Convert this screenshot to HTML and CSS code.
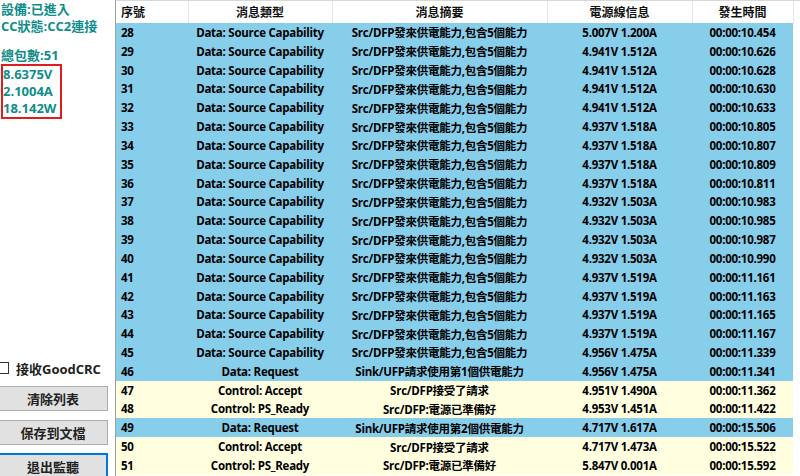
FILE: index.html
```html
<!DOCTYPE html>
<html lang="zh-TW">
<head>
  <meta charset="UTF-8" />
  <title>PD監聽</title>
  <link rel="stylesheet" href="styles.css">
</head>
<body>
  <div class="app">
    <!-- 左側狀態欄 -->
    <div class="side">
      <div class="status">
        <div>設備:已進入</div>
        <div>CC狀態:CC2連接</div>
      </div>
      <div class="count">總包數:51</div>
      <div class="meter">
        <div>8.6375V</div>
        <div>2.1004A</div>
        <div>18.142W</div>
      </div>
      <div class="spacer"></div>
      <label class="check"><span class="box"></span>接收GoodCRC</label>
      <button class="btn">清除列表</button>
      <button class="btn">保存到文檔</button>
      <button class="btn focus">退出監聽</button>
    </div>

    <!-- 消息列表 -->
    <div class="list">
      <table class="grid">
        <colgroup>
          <col style="width:72px">
          <col style="width:144px">
          <col style="width:215px">
          <col style="width:145px">
          <col style="width:101px">
        </colgroup>
        <thead>
          <tr>
            <th class="first">序號</th>
            <th>消息類型</th>
            <th>消息摘要</th>
            <th>電源線信息</th>
            <th>發生時間</th>
          </tr>
        </thead>
        <tbody id="rows"></tbody>
      </table>
    </div>
  </div>

  <script>
    // 消息數據
    var cap = ["Data: Source Capability", "Src/DFP發來供電能力,包含5個能力"];
    var data = [
      [28, cap, "5.007V 1.200A", "00:00:10.454"],
      [29, cap, "4.941V 1.512A", "00:00:10.626"],
      [30, cap, "4.941V 1.512A", "00:00:10.628"],
      [31, cap, "4.941V 1.512A", "00:00:10.630"],
      [32, cap, "4.941V 1.512A", "00:00:10.633"],
      [33, cap, "4.937V 1.518A", "00:00:10.805"],
      [34, cap, "4.937V 1.518A", "00:00:10.807"],
      [35, cap, "4.937V 1.518A", "00:00:10.809"],
      [36, cap, "4.937V 1.518A", "00:00:10.811"],
      [37, cap, "4.932V 1.503A", "00:00:10.983"],
      [38, cap, "4.932V 1.503A", "00:00:10.985"],
      [39, cap, "4.932V 1.503A", "00:00:10.987"],
      [40, cap, "4.932V 1.503A", "00:00:10.990"],
      [41, cap, "4.937V 1.519A", "00:00:11.161"],
      [42, cap, "4.937V 1.519A", "00:00:11.163"],
      [43, cap, "4.937V 1.519A", "00:00:11.165"],
      [44, cap, "4.937V 1.519A", "00:00:11.167"],
      [45, cap, "4.956V 1.475A", "00:00:11.339"],
      [46, ["Data: Request", "Sink/UFP請求使用第1個供電能力"], "4.956V 1.475A", "00:00:11.341"],
      [47, ["Control: Accept", "Src/DFP接受了請求"], "4.951V 1.490A", "00:00:11.362", "ctl"],
      [48, ["Control: PS_Ready", "Src/DFP:電源已準備好"], "4.953V 1.451A", "00:00:11.422", "ctl"],
      [49, ["Data: Request", "Sink/UFP請求使用第2個供電能力"], "4.717V 1.617A", "00:00:15.506"],
      [50, ["Control: Accept", "Src/DFP接受了請求"], "4.717V 1.473A", "00:00:15.522", "ctl"],
      [51, ["Control: PS_Ready", "Src/DFP:電源已準備好"], "5.847V 0.001A", "00:00:15.592", "ctl"]
    ];

    var html = "";
    data.forEach(function (r) {
      html += '<tr class="' + (r[4] || "dat") + '">' +
        '<td class="first">' + r[0] + '</td>' +
        '<td>' + r[1][0] + '</td>' +
        '<td>' + r[1][1] + '</td>' +
        '<td>' + r[2] + '</td>' +
        '<td>' + r[3] + '</td></tr>';
    });
    document.getElementById("rows").innerHTML = html;
  </script>
</body>
</html>
```

FILE: styles.css
```css
/* 基本 */
html, body {
  margin: 0;
  padding: 0;
  background: #fff;
  overflow: hidden;
}
body {
  font-family: "Open Sans", "Noto Sans CJK TC", sans-serif;
  width: 800px;
  height: 476px;
}
.app {
  display: flex;
  height: 476px;
}

/* 左側 */
.side {
  width: 115px;
  flex: none;
  display: flex;
  flex-direction: column;
  font-weight: bold;
}
.status, .count, .meter {
  color: #0f8d8b;
  font-size: 13px;
  line-height: 17px;
  padding-left: 1px;
}
.status {
  padding-top: 1px;
}
.count {
  margin-top: 12px;
}
.meter {
  width: 57px;
  border: 2px solid #e01c1c;
  margin-left: 1px;
  padding: 0 0 0 0;
}
.spacer {
  flex: 1;
}
.check {
  display: flex;
  align-items: center;
  font-size: 13px;
  color: #222;
  height: 18px;
  margin-bottom: 9px;
  margin-left: -3px;
}
.box {
  width: 10px;
  height: 10px;
  border: 1px solid #333;
  background: #fff;
  margin-right: 7px;
}
.btn {
  font-family: inherit;
  font-weight: bold;
  font-size: 13px;
  width: 110px;
  height: 25px;
  margin: 0 0 9px -2px;
  padding: 0;
  background: #e1e1e1;
  border: 1px solid #adadad;
  color: #222;
}
.btn + .btn {
  margin-bottom: 8px;
}
.btn.focus {
  border: 2px solid #0078d7;
  height: 30px;
  padding-bottom: 3px;
  margin-bottom: -7px;
}

/* 列表 */
.list {
  flex: 1;
  border-left: 1px solid #a0a0a0;
  border-top: 1px solid #d8d8d8;
}
.grid {
  border-collapse: collapse;
  table-layout: fixed;
  width: 677px;
  font-size: 11.5px;
  font-weight: bold;
  letter-spacing: -0.25px;
}
.grid th {
  height: 22px;
  padding: 0;
  background: #fff;
  border-right: 1px solid #e5e5e5;
  font-weight: 600;
  font-size: 12px;
  letter-spacing: 0;
  color: #111;
  text-align: center;
}
.grid td {
  height: 18.83px;
  padding: 0;
  text-align: center;
  white-space: nowrap;
  overflow: hidden;
  color: #000;
}
.grid .first {
  text-align: left;
  padding-left: 5px;
}
tr.dat td {
  background: #87ceeb;
}
tr.ctl td {
  background: #ffffe0;
}
```
